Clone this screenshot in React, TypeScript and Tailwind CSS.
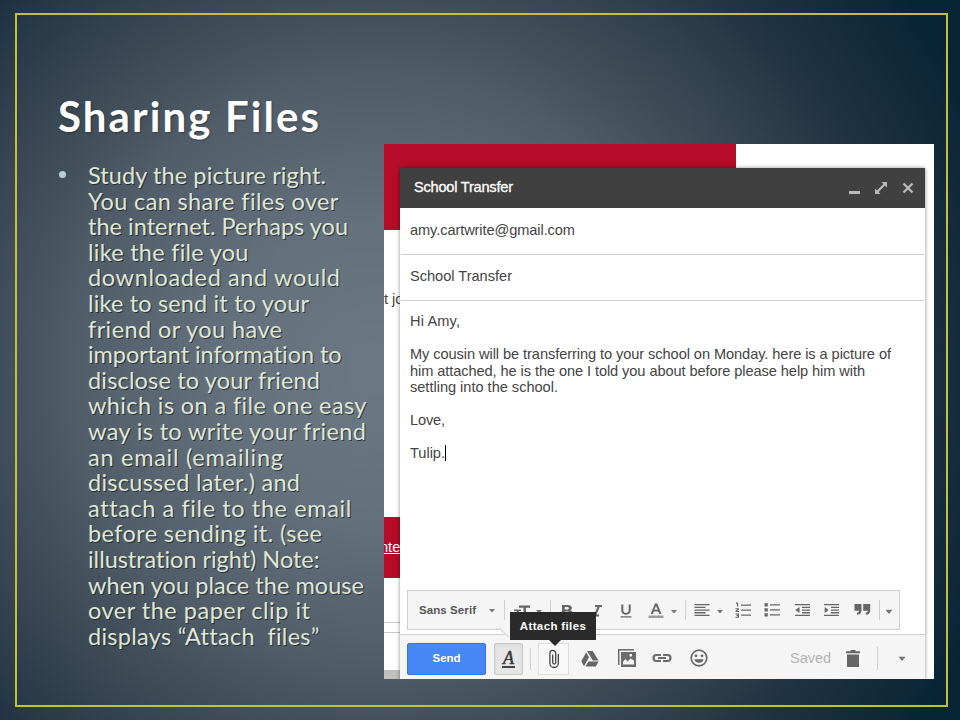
import { useLayoutEffect, useRef, useState } from "react";
import type { ReactNode } from "react";

/* One line of text whose tracking is adjusted so it spans the given width. */
function FitLine({ width, children }: { width: number; children: string }) {
  const ref = useRef<HTMLSpanElement>(null);
  const [spacing, setSpacing] = useState(0);
  useLayoutEffect(() => {
    if (!ref.current) return;
    const natural = ref.current.getBoundingClientRect().width;
    setSpacing((width - natural) / (children.length - 1));
  }, [width, children]);
  return (
    <span ref={ref} className="inline-block whitespace-pre" style={{ letterSpacing: spacing + "px" }}>
      {children}
    </span>
  );
}

const bodyLines: [string, number][] = [
  ["Study the picture right.", 238],
  ["You can share files over", 250],
  ["the internet. Perhaps you", 260],
  ["like the file you", 160],
  ["downloaded and would", 252],
  ["like to send it to your", 221],
  ["friend or you have", 194],
  ["important information to", 254],
  ["disclose to your friend", 232],
  ["which is on a file one easy", 278],
  ["way is to write your friend", 278],
  ["an email (emailing", 195],
  ["discussed later.) and", 212],
  ["attach a file to the email", 262],
  ["before sending it. (see", 234],
  ["illustration right) Note:", 232],
  ["when you place the mouse", 276],
  ["over the paper clip it", 222],
  ["displays “Attach  files”", 230],
];

const mailLines: [string, number][] = [
  ["Hi Amy,", 50],
  ["", 0],
  ["My cousin will be transferring to your school on Monday. here is a picture of", 481],
  ["him attached, he is the one I told you about before please help him with", 455],
  ["settling into the school.", 148],
  ["", 0],
  ["Love,", 35],
  ["", 0],
];

function Caret({ className = "" }: { className?: string }) {
  return (
    <svg viewBox="0 0 6 4" className={"h-1 w-1.5 shrink-0 " + className} fill="#777">
      <path d="M0 0h6L3 3.6z" />
    </svg>
  );
}

function Sep({ className = "" }: { className?: string }) {
  return <div className={"w-px shrink-0 bg-[#cfcfcf] " + className} />;
}

function Icon({ className = "", children }: { className?: string; children: ReactNode }) {
  return (
    <svg viewBox="0 0 20 20" className={"size-5 shrink-0 " + className} fill="#666">
      {children}
    </svg>
  );
}

function FormatBar() {
  return (
    <div className="mx-1.5 flex h-10 w-[493px] items-center border border-[#cfcfcf] bg-[#f5f5f5] pl-[11px]">
      <div className="w-[61px] pt-0.5 text-[11.5px] font-bold text-[#555]">
        <FitLine width={57}>Sans Serif</FitLine>
      </div>
      <Caret className="mt-0.5 ml-[9px]" />
      <Sep className="ml-[9px] h-5" />
      <Icon className="ml-[9px]">
        <path d="M5 5.500h11v2.300h-4v9H9.500v-9H5zM0 9.500h7v1.500H4.800V16H2.700v-5H0z" />
      </Icon>
      <Caret className="mt-1 ml-0.5" />
      <Sep className="ml-2 h-5" />
      <Icon className="ml-1.5">
        <path fillRule="evenodd" d="M5 5h6c4.500 0 5 4.200 2.300 5.300 3.600 1.200 2.800 6.200-1.800 6.200H5zm2.800 2v2.500h2.700c1.700 0 1.700-2.500 0-2.500zm0 4.500v3h3c2 0 2-3 0-3z" />
      </Icon>
      <Icon className="ml-2.5">
        <path d="M8 5h7v2h-2.300L9.600 14.500H12v2H5v-2h2.200L10.300 7H8z" />
      </Icon>
      <Icon className="ml-[9px]">
        <path d="M5.300 4.500h2v6c0 3.300 5.400 3.300 5.400 0v-6h2v6.200c0 5.500-9.400 5.500-9.400 0zM4.500 16.200h11v1.300h-11z" />
      </Icon>
      <Icon className="ml-2.5">
        <path fillRule="evenodd" d="M9 3.500h2.200L15.500 14h-2.200l-1-2.500H7.800l-1 2.500H4.700zm1 2.300L8.400 9.800h3.300z" />
        <path fill="#999" d="M2.500 15.500h15V18h-15z" />
      </Icon>
      <Caret className="mt-1 ml-[5px]" />
      <Sep className="ml-2 h-5" />
      <Icon className="ml-1.5">
        <path d="M2.500 4h15v1.300h-15zm0 2.700h11V8h-11zm0 2.700h15v1.300h-15zm0 2.700h11v1.300h-11zm0 2.700h15v1.300h-15z" />
      </Icon>
      <Caret className="mt-1 ml-[5px]" />
      <Icon className="ml-2.5">
        <path d="M8 4.500h10v1.200H8zm0 5h10v1.200H8zm0 5h10v1.200H8zM3 2.500h2.200v4H3.900V3.800H3zM2.500 8.200h3.500v1.300l-2 1.500h2v1.100H2.500v-1.200l2-1.600h-2zM2.500 13.500h3.500v4.300H2.500v-1.100h2.200v-.6H3.500v-1h1.200v-.5H2.500z" />
      </Icon>
      <Icon className="ml-[9px]">
        <path d="M8 4.300h10v1.300H8zm0 5h10v1.300H8zm0 5h10v1.300H8zM2.500 3.200h3.300v3.300H2.500zm0 5h3.300v3.300H2.500zm0 5h3.300v3.300H2.500z" />
      </Icon>
      <Icon className="ml-[11px]">
        <path d="M2 4h15v1.300H2zm7 2.700h8V8H9zm0 2.700h8v1.300H9zm0 2.700h8v1.300H9zm-7 2.700h15v1.300H2zM6.500 7v6L2.300 10z" />
      </Icon>
      <Icon className="ml-[9px]">
        <path d="M2 4h15v1.300H2zm7 2.700h8V8H9zm0 2.700h8v1.300H9zm0 2.700h8v1.300H9zm-7 2.700h15v1.300H2zM2.700 7v6l4-3z" />
      </Icon>
      <Icon className="ml-2.5">
        <path d="M2.500 4h7v6.500c0 2.800-1.600 4.300-4.500 4.300v-2.100c1.500 0 2-.7 2-1.900H2.500zm8.700 0h7v6.500c0 2.800-1.600 4.300-4.500 4.300v-2.100c1.500 0 2-.7 2-1.900h-4.500z" />
      </Icon>
      <Sep className="ml-[7px] h-5" />
      <Caret className="mt-1 ml-1.5 scale-125" />
    </div>
  );
}

function ActionBar() {
  return (
    <div className="flex h-[46px] items-center border-t border-[#cfcfcf] bg-[#f5f5f5] pt-0.5 pl-[7px]">
      <div className="flex h-8 w-[79px] items-center justify-center rounded-xs border border-[#3079ed] bg-[#4787f5] text-[11.5px] font-bold text-white">
        <FitLine width={28}>Send</FitLine>
      </div>
      <div className="ml-2 flex h-8 w-[29px] items-center justify-center rounded-xs border border-[#c8c8c8] bg-[#e6e6e6] shadow-inner">
        <span className="border-b-2 border-[#444] px-px font-['Liberation_Serif',serif] text-[18px] leading-[16px] italic text-[#333] [-webkit-text-stroke:0.4px_#333]">A</span>
      </div>
      <Sep className="ml-[7px] h-[22px]" />
      <div className="ml-[7px] flex h-8 w-[31px] items-center justify-center border border-[#dcdcdc] bg-[#f8f8f8]">
        <svg viewBox="0 0 12 20" className="h-5 w-3" fill="none" stroke="#444" strokeWidth="1.3">
          <path d="M10.300 5v9.300a4.200 4.200 0 0 1-8.400 0V4.300a2.800 2.800 0 0 1 5.800 0v9.300a1.500 1.500 0 0 1-3 0V5.500" />
        </svg>
      </div>
      <svg viewBox="0 0 18 16" className="ml-3 h-4 w-[18px]" fill="#666">
        <path d="M6 0h5.700l5.800 9.500h-5.700zM5.200 1.300l2.800 4.900-5 9L.3 10.300zM7.300 10.600h10.200L14.800 15.500H4.500z" />
      </svg>
      <svg viewBox="0 0 18 18" className="mb-0.5 ml-[19px] size-[18px]" fill="#6c6c6c">
        <path d="M0 0h16v1.500H1.500V16H0z" />
        <path fillRule="evenodd" d="M3 3h15v15H3zm2 12.500h11v-4l-3.500-2-3 3L7.300 10 5 13zM11.500 5v2.500H14V5z" />
      </svg>
      <svg viewBox="0 0 20 10" className="mb-0.5 ml-4 h-2.5 w-5" fill="none" stroke="#6c6c6c" strokeWidth="2.200">
        <path d="M9 2H4.500a3 3 0 0 0 0 6H9M11 2h4.500a3 3 0 0 1 0 6H11M6 5h8" />
      </svg>
      <svg viewBox="0 0 18 18" className="mb-0.5 ml-[18px] size-[18px]" fill="#666">
        <circle cx="9" cy="9" r="7.800" fill="none" stroke="#666" strokeWidth="1.700" />
        <circle cx="6" cy="6.800" r="1.400" />
        <circle cx="12" cy="6.800" r="1.400" />
        <path d="M4.300 10.300h9.400c-1.200 4.700-8.200 4.700-9.400 0z" />
      </svg>
      <div className="ml-[82px] w-[56px] text-[14.5px] text-[#b4b4b4]">
        <FitLine width={41}>Saved</FitLine>
      </div>
      <svg viewBox="0 0 14 17" className="h-[17px] w-3.5" fill="#666">
        <path d="M4.500 0h5v1.300H14v2H0v-2h4.500zM1 4.500h12V17H1z" />
      </svg>
      <Sep className="ml-[17px] h-[23px]" />
      <Caret className="ml-[21px] scale-125" />
    </div>
  );
}

function ComposeWindow() {
  return (
    <div className="absolute top-6 left-4 flex h-[512px] w-[525px] flex-col bg-white text-[14.6px] text-[#444] shadow-[0_0_4px_rgba(0,0,0,0.45)]">
      <div className="flex h-10 shrink-0 items-center bg-[#404040] pr-[11px] pl-3.5 text-white">
        <div className="flex-1 [-webkit-text-stroke:0.3px_white]">
          <FitLine width={99}>School Transfer</FitLine>
        </div>
        <div className="mt-2 h-[3px] w-[11px] bg-[#bbb]" />
        <svg viewBox="0 0 12 12" className="ml-[15px] size-3" fill="#bbb">
          <path d="M6.500 0H12v5.500L10 3.600 3.600 10l1.900 2H0V6.500l2 1.900L8.400 2z" />
        </svg>
        <svg viewBox="0 0 12 12" className="ml-[15px] size-3" fill="none" stroke="#bbb" strokeWidth="2.300">
          <path d="M1.500 1.500l9 9M10.500 1.500l-9 9" />
        </svg>
      </div>
      <div className="mx-px flex h-[47px] shrink-0 items-center border-b border-[#cfcfcf] pl-[9px]">
        <FitLine width={165}>amy.cartwrite@gmail.com</FitLine>
      </div>
      <div className="mx-px flex h-[46px] shrink-0 items-center border-b border-[#cfcfcf] pb-0.5 pl-[9px]">
        <FitLine width={102}>School Transfer</FitLine>
      </div>
      <div className="flex-1 pt-3 pl-2.5 leading-[16.5px]">
        {mailLines.map(([text, width], i) => (
          <div key={i} className="h-[16.5px]">
            {text && <FitLine width={width}>{text}</FitLine>}
          </div>
        ))}
        <div className="flex h-[16.5px]">
          <FitLine width={35}>Tulip.</FitLine>
          <span className="h-4 w-px bg-black" />
        </div>
      </div>
      <div className="ml-px">
        <FormatBar />
      </div>
      <div className="mt-1">
        <ActionBar />
      </div>
      <svg viewBox="0 0 14 10" className="absolute top-[460px] left-[96px] h-2.5 w-3.5">
        <path d="M0 0l14 10V0z" fill="#f5f5f5" />
        <path d="M0 1h4l9 8" fill="none" stroke="#cfcfcf" />
      </svg>
      <div className="absolute top-[444px] left-[110px] flex h-7 w-[86px] items-center justify-center bg-[#2a2a2a] pt-0.5 text-[11.5px] font-bold text-white">
        <FitLine width={66}>Attach files</FitLine>
        <svg viewBox="0 0 12 6" className="absolute top-full left-[39px] h-1.5 w-3" fill="#2a2a2a">
          <path d="M0 0h12L6 6z" />
        </svg>
      </div>
    </div>
  );
}

function MailScreenshot() {
  return (
    <div className="relative flex h-[535px] w-[550px] flex-col overflow-hidden bg-white font-['Liberation_Sans',Arial,sans-serif] text-[14.6px]">
      <div className="h-[86px] w-[352px] shrink-0 bg-[#b60c29]" />
      <div className="mt-[60px] h-[19px] leading-[19px] text-[#444]">
        <span>t jo</span>
      </div>
      <div className="mt-[208px] flex h-[61px] w-5 shrink-0 items-center overflow-hidden bg-[#b60c29] text-white underline">
        <span className="-ml-1">nter</span>
      </div>
      <div className="mt-11 h-[11px] w-5 shrink-0 border-y border-[#c8c8c8]" />
      <div className="mt-[37px] h-[9px] w-5 shrink-0 bg-[#bfbfbf]" />
      <ComposeWindow />
    </div>
  );
}

export default function App() {
  return (
    <div className="flex h-[720px] w-[960px] overflow-hidden bg-[radial-gradient(ellipse_610px_590px_at_375px_370px,#6c7883_0%,#64707b_25%,#505c67_50%,#364551_70%,#1e3141_88%,#082535_108%)] pt-[13px] pl-[15px] font-['Lato',sans-serif]">
      <div className="flex h-[694px] w-[933px] border-2 border-[#c3c03b]">
        <div className="flex w-[367px] shrink-0 flex-col pt-[71px] pl-[41px]">
          <h1 className="h-[77px] text-[42px] leading-[60px] font-bold text-white [text-shadow:1px_1px_2px_rgba(0,0,0,0.3)]">
            <FitLine width={261}>Sharing Files</FitLine>
          </h1>
          <div className="flex">
            <div className="mt-[8px] mr-[22px] ml-px size-[7px] shrink-0 rounded-full bg-[#b5d2da]" />
            <div className="text-[23.5px] leading-[25.6px] text-[#e0e8d4] [text-shadow:1px_1px_0_rgba(20,30,45,0.75)]">
              {bodyLines.map(([text, width]) => (
                <div key={text} className="h-[25.6px]">
                  <FitLine width={width}>{text}</FitLine>
                </div>
              ))}
            </div>
          </div>
        </div>
        <div className="pt-[129px]">
          <MailScreenshot />
        </div>
      </div>
    </div>
  );
}
